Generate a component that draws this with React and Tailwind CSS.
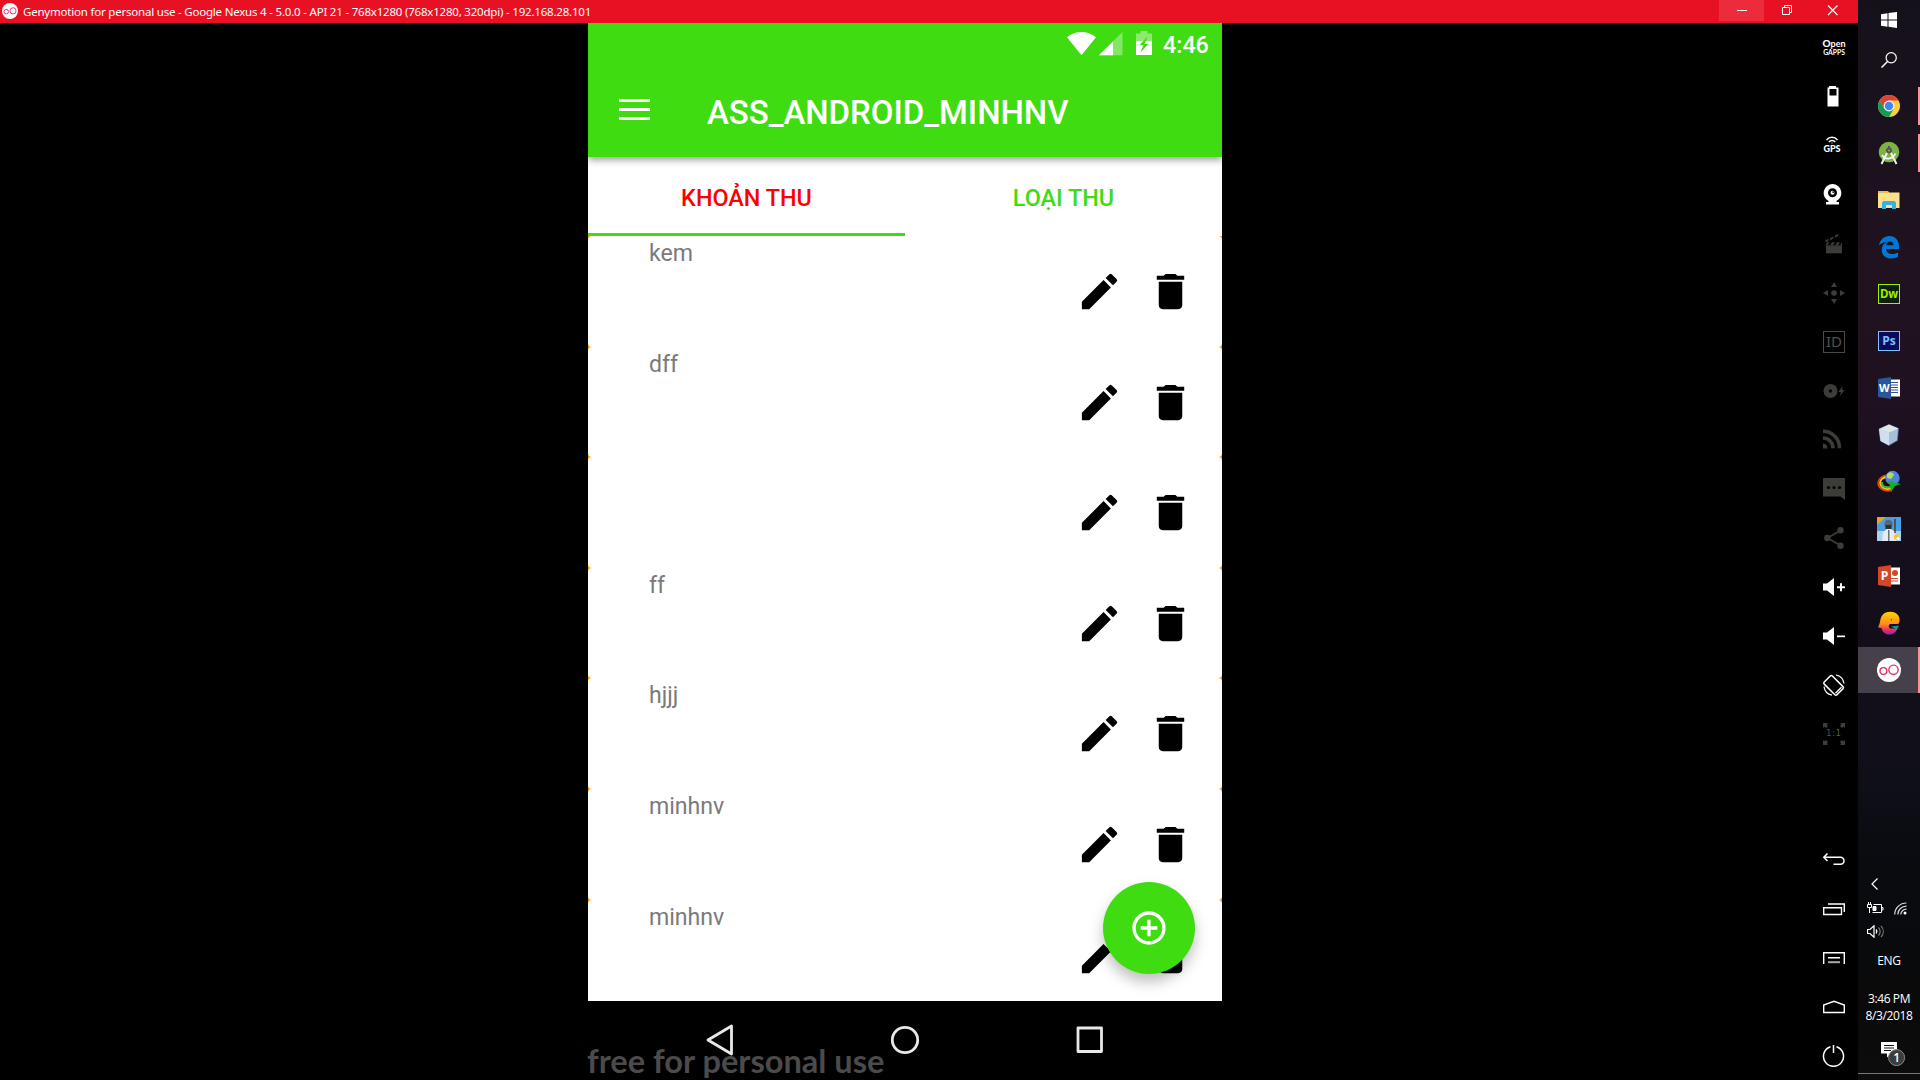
import React from 'react';

const roboto = "font-['Roboto','Noto_Sans',sans-serif]";

/* ---------- phone ---------- */

const rows = ['kem', 'dff', '', 'ff', 'hjjj', 'minhnv', 'minhnv'];

const Pencil = () => (
  <svg className="h-[47px] w-[47px]" viewBox="0 0 24 24" fill="#000">
    <path d="M3 17.25V21h3.75L17.81 9.94l-3.75-3.75L3 17.25zM20.71 7.04a.996.996 0 0 0 0-1.41l-2.34-2.34a.996.996 0 0 0-1.41 0l-1.83 1.83 3.75 3.75 1.83-1.83z" />
  </svg>
);
const Trash = () => (
  <svg className="h-[47px] w-[47px]" viewBox="0 0 24 24" fill="#000">
    <path d="M6 19c0 1.1.9 2 2 2h8c1.1 0 2-.9 2-2V7H6v12zM19 4h-3.5l-1-1h-5l-1 1H5v2h14V4z" />
  </svg>
);

function StatusBar() {
  return (
    <div className="flex h-[40px] items-start pl-[479px] text-white">
      <svg className="mt-[9px] h-[24px] w-[29px] shrink-0" viewBox="0 0 29 24" fill="#fff">
        <path d="M0 5.2C8.5-1.7 20.5-1.7 29 5.2L14.5 23.3z" />
      </svg>
      <svg className="ml-[3px] mt-[9px] h-[24px] w-[24px] shrink-0" viewBox="0 0 24 24" fill="#fff">
        <path d="M23.5 0v23.3H0z" opacity=".35" />
        <path d="M14 9.5v13.8H0z" />
      </svg>
      <svg className="ml-[13px] mt-[8px] h-[24px] w-[16px] shrink-0" viewBox="0 0 16 24">
        <path d="M4.5 0h7v2.500H16V10H0V2.500h4.500z" fill="#fff" opacity=".4" />
        <path d="M0 10h16v14H0z" fill="#fff" />
        <path d="M11.500 5.500L3.500 14h4L4.500 21.500l8-8.500h-4z" fill="#40dc12" />
      </svg>
      <span className="ml-[11px] mt-[9px] text-[23.300px] font-medium leading-[27px]">4:46</span>
    </div>
  );
}

function AppBar() {
  return (
    <header className="relative z-10 h-[134px] bg-[#40dc12] shadow-[0_3px_7px_rgba(0,0,0,0.38)]">
      <StatusBar />
      <div className="flex h-[94px] items-start pl-[31px] text-white">
        <div className="mt-[36px] flex w-[31px] flex-col gap-[6px]">
          <div className="h-[3px] bg-white" />
          <div className="h-[3px] bg-white" />
          <div className="h-[3px] bg-white" />
        </div>
        <h1 className="ml-[57px] mt-[30px] whitespace-nowrap text-[33px] font-medium leading-[40px] tracking-[-0.05px]">ASS_ANDROID_MINHNV</h1>
      </div>
    </header>
  );
}

function Tabs() {
  return (
    <div className="flex h-[79px] text-[23.400px] font-medium leading-[27px]">
      <div className="flex h-[79px] w-[317px] justify-center border-b-[3px] border-[#40dc12] pt-[28px] text-[#ff0000]">KHOẢN THU</div>
      <div className="flex w-[317px] justify-center pt-[28px] text-[#40dc12]">LOẠI THU</div>
    </div>
  );
}

function Row({ label }) {
  return (
    <li className="flex h-[110.600px] shrink-0 bg-[#ff9800]">
      <div className="flex flex-1 items-start rounded-[4px] bg-white">
        <span className="ml-[61px] mt-[4px] w-[427px] text-[23.100px] leading-[27px] text-[#7a7a7a]">{label}</span>
        <div className="mt-[32px] flex gap-[24px]">
          <Pencil />
          <Trash />
        </div>
      </div>
    </li>
  );
}

function Phone() {
  return (
    <div className={`relative flex h-[1057px] w-[634px] flex-col ${roboto}`}>
      <div className="relative flex h-[977.500px] flex-col overflow-hidden bg-white">
        <AppBar />
        <Tabs />
        <ul className="flex flex-col">
          {rows.map((r, i) => <Row key={i} label={r} />)}
        </ul>
        <button className="absolute right-[27px] top-[859px] z-20 flex h-[92px] w-[92px] items-center justify-center rounded-full bg-[#40dc12] shadow-[0_8px_14px_rgba(0,0,0,0.25)]">
          <svg className="h-[40px] w-[40px]" viewBox="0 0 24 24" fill="#fff">
            <path d="M13 7h-2v4H7v2h4v4h2v-4h4v-2h-4V7zm-1-5C6.480 2 2 6.480 2 12s4.480 10 10 10 10-4.480 10-10S17.520 2 12 2zm0 18c-4.410 0-8-3.590-8-8s3.590-8 8-8 8 3.590 8 8-3.590 8-8 8z" />
          </svg>
        </button>
      </div>
      <nav className="flex h-[79px] items-center pl-[117px]">
        <svg className="h-[32px] w-[29px]" viewBox="0 0 29 32" fill="none" stroke="#e8e8e8" strokeWidth="2.800" strokeLinejoin="round">
          <path d="M26.500 2v28L3 16z" />
        </svg>
        <svg className="ml-[156px] h-[30px] w-[30px]" viewBox="0 0 30 30" fill="none" stroke="#e8e8e8" strokeWidth="2.800">
          <circle cx="15" cy="15" r="12.700" />
        </svg>
        <svg className="ml-[156px] h-[28px] w-[28px]" viewBox="0 0 28 28" fill="none" stroke="#e8e8e8" strokeWidth="2.800" strokeLinejoin="round">
          <path d="M2 2h23.500v23.500H2z" />
        </svg>
      </nav>
      <div className="absolute left-[-1px] top-[1018px] whitespace-nowrap font-['Lato',sans-serif] text-[32.600px] font-bold leading-[40px] text-[#505050]/95">free for personal use</div>
    </div>
  );
}

/* ---------- emulator toolbar ---------- */

const dim = '#3c3c38';
const I = ({ children, ...p }) => (
  <svg className="h-[24px] w-[24px]" viewBox="0 0 24 24" fill="none" {...p}>{children}</svg>
);

const Gapps = () => (
  <div className="flex w-[24px] flex-col items-center font-['Lato',sans-serif] text-white">
    <span className="text-[9px] font-bold leading-[8px]"><span className="text-[10px] font-black">O</span>pen</span>
    <span className="text-[6.800px] font-bold leading-[9px]">GAPPS</span>
  </div>
);
const BatteryIcon = () => (
  <I><path d="M7 1h7v1.500h2.500V21.500h-11V2.500H7zM7.500 4v6.500h7V4z" fill="#fff" fillRule="evenodd" /></I>
);
const Gps = () => (
  <div className="mb-[2px] mr-[4px] flex w-[20px] flex-col items-center">
    <svg className="h-[8px] w-[14px]" viewBox="0 0 14 8" fill="none" stroke="#fff" strokeWidth="1.500">
      <path d="M1.500 4c3-3.600 8-3.600 11 0M3.800 6c2-2 4.500-2 6.500 0" />
      <circle cx="7" cy="7" r=".6" fill="#fff" stroke="none" />
    </svg>
    <span className="font-['Lato',sans-serif] text-[9px] font-black leading-[10px] text-white">GPS</span>
  </div>
);
const Webcam = () => (
  <I>
    <path d="M10.500 1a9 9 0 0 1 4 17v1h2.500v2.500H4v-2.500h2.500v-1a9 9 0 0 1 4-17z" fill="#fff" />
    <circle cx="10.500" cy="9.800" r="4.500" fill="#000" />
    <circle cx="10.500" cy="9.800" r="2" fill="#fff" /><circle cx="11.200" cy="9.100" r=".9" fill="#000" />
  </I>
);
const Clapper = () => (
  <I fill={dim}>
    <g transform="translate(-1 -.7)">
      <path d="M5 14h16v8H5z" />
      <path d="M4.500 9l3.200-1.600-.5 2.500-2.500 1.200zM9.200 6.600l3.200-1.600-.5 2.500-3.200 1.600zM14 4.200l3.500-1.700-.8 2.500-3 1.500z" />
      <path d="M5 14v-1.500L6.500 11h2L6.500 14zM9 14l2-3h3l-2 3zM14 14l2-3h3l-2 3zM19 14l2-3v3z" />
    </g>
  </I>
);
const Move = () => (
  <I fill={dim}>
    <circle cx="12" cy="12" r="2.800" />
    <path d="M12 1l3 5H9zM12 23l3-5H9zM1 12l5-3v6zM23 12l-5-3v6z" />
  </I>
);
const IdIcon = () => (
  <div className="flex h-[22px] w-[22px] items-center justify-center border border-[#484844] font-['Noto_Sans',sans-serif] text-[15px] leading-none text-[#50504c]">ID</div>
);
const Disc = () => (
  <I fill={dim}>
    <path d="M8.500 5a7 7 0 1 1 0 14 7 7 0 0 1 0-14zm0 5.300a1.700 1.700 0 1 0 0 3.400 1.700 1.700 0 0 0 0-3.400z" fillRule="evenodd" />
    <path d="M20.500 7l-4 6h2.500l-1.500 4.500 5-6.500h-2.500z" />
  </I>
);
const Rss = () => (
  <I stroke={dim} strokeWidth="3.600">
    <path d="M1 3.200c9 0 16.500 7 16.500 17M1 10c5.500 0 10 4.500 10 10.200" />
    <path d="M1 20.500v-5a5 5 0 0 1 4.500 5z" fill={dim} stroke="none" />
  </I>
);
const Chat = () => (
  <I fill={dim}>
    <path d="M1 1h22v22l-4.500-3.500H1z" />
    <g fill="#000"><circle cx="6.500" cy="10.500" r="1.600" /><circle cx="12" cy="10.500" r="1.600" /><circle cx="17.500" cy="10.500" r="1.600" /></g>
  </I>
);
const Share = () => (
  <I fill={dim}>
    <path d="M18.500 4.500L5.500 12l13 7.500" fill="none" stroke={dim} strokeWidth="1.800" />
    <circle cx="18.500" cy="4.300" r="3.200" /><circle cx="5.300" cy="12" r="3.200" /><circle cx="18.500" cy="19.700" r="3.200" />
  </I>
);
const Vol = ({ plus }) => (
  <I fill="#fff">
    <path d="M1 8.500h4L12 3v18l-7-5.500H1z" />
    <path d={plus ? 'M15 11.200h8v2h-8zM18 8.200h2v8h-2z' : 'M15 11.500h8v1.700h-8z'} />
  </I>
);
const Rotate = () => (
  <I stroke="#fff" strokeWidth="1.500">
    <rect x="5.700" y="3" width="11.500" height="18" rx="1.500" transform="rotate(-45 12 12)" />
    <path d="M13.500 20.200l6-6" />
    <path d="M14 2a10 10 0 0 1 8 8.500M10 22.200a10 10 0 0 1-8-8.500" strokeWidth="1.200" />
  </I>
);
const OneToOne = () => (
  <div className="grid h-[24px] w-[24px] place-items-center">
    <svg className="col-start-1 row-start-1 h-[24px] w-[24px]" viewBox="0 0 24 24" fill={dim}>
      <path d="M1 1h5L4.800 2.200 6 4 4 6 2.200 4.800 1 6zM23 1h-5l1.200 1.200L18 4l2 2 1.800-1.200L23 6zM1 23h5l-1.200-1.200L6 20l-2-2-1.800 1.200L1 18zM23 23h-5l1.200-1.200L18 20l2-2 1.800 1.200L23 18z" />
    </svg>
    <span className="col-start-1 row-start-1 font-['DejaVu_Sans',sans-serif] text-[8px] leading-none tracking-[0.8px] text-[#5a5a56]">1:1</span>
  </div>
);
const Back = () => (
  <I stroke="#fff" strokeWidth="1.500">
    <path d="M5.500 5.500L1.800 9.300 5.500 13M2 9.300h16.500a3.500 3.500 0 0 1 0 7H11.500" />
  </I>
);
const Recent = () => (
  <I stroke="#fff" strokeWidth="1.400"><path d="M1.700 10.700h17.800v6.800H1.700zM6 7h16.300v8" /></I>
);
const MenuIcon = () => (
  <I stroke="#fff" strokeWidth="1.400"><path d="M1.700 18V6.700h20.600V18M6 11.700h12" /><path d="M6 16.200h12" strokeWidth="2" stroke="#aaa" /></I>
);
const HomeIcon = () => (
  <I stroke="#fff" strokeWidth="1.400"><path d="M1.700 17.500V10L12 6.300 22.300 10v7.500z" /></I>
);
const Power = () => (
  <I stroke="#fff" strokeWidth="1.500"><path d="M8.500 2.700a10 10 0 1 0 6 0M11.500 1v8" /></I>
);

const toolsTop = [Gapps, BatteryIcon, Gps, Webcam, Clapper, Move, IdIcon, Disc, Rss, Chat, Share, () => <Vol plus />, Vol, Rotate, OneToOne];
const toolsBottom = [Back, Recent, MenuIcon, HomeIcon, Power];

function Toolbar() {
  return (
    <aside className="flex w-[48px] flex-col justify-between">
      {[toolsTop, toolsBottom].map((group, g) => (
        <div key={g} className={g ? 'mb-[-0.5px] flex flex-col' : 'flex flex-col'}>
          {group.map((T, i) => (
            <div key={i} className="flex h-[49px] items-center justify-center"><T /></div>
          ))}
        </div>
      ))}
    </aside>
  );
}

/* ---------- title bar ---------- */

function Genymotion({ className }) {
  return (
    <svg className={className} viewBox="0 0 24 24" fill="none" stroke="#dc2f6d" strokeWidth="1.400">
      <circle cx="12" cy="12" r="12" fill="#fff" stroke="none" />
      <circle cx="6.400" cy="13" r="3.400" /><ellipse cx="16.500" cy="11.800" rx="4.600" ry="4.700" />
    </svg>
  );
}

function TitleBar() {
  return (
    <div className="flex h-[23px] bg-[#e81123] text-white">
      <Genymotion className="ml-[2px] mt-[3px] h-[16px] w-[16px]" />
      <span className="ml-[5px] flex-1 whitespace-nowrap font-['Noto_Sans',sans-serif] text-[11.500px] leading-[23px] tracking-[-0.205px]">
        Genymotion for personal use - Google Nexus 4 - 5.0.0 - API 21 - 768x1280 (768x1280, 320dpi) - 192.168.28.101
      </span>
      <div className="flex h-[21px]">
        <div className="flex w-[45px] items-center justify-center bg-[#ec2c3c]"><div className="h-px w-[10px] bg-white" /></div>
        <svg className="h-[21px] w-[46px]" viewBox="0 0 46 21" fill="none" stroke="#fff">
          <path d="M18.500 7.500h7v7h-7zM20.500 7.500v-2h7v7h-2" />
        </svg>
        <svg className="h-[21px] w-[48px]" viewBox="0 0 48 21" fill="none" stroke="#fff" strokeWidth="1.200">
          <path d="M18 5.500l9.500 9.500M27.500 5.500L18 15" />
        </svg>
      </div>
    </div>
  );
}

/* ---------- windows taskbar ---------- */

const T = ({ children, ...p }) => (
  <svg className="h-[24px] w-[24px]" viewBox="0 0 24 24" {...p}>{children}</svg>
);
const Chrome = () => (
  <T>
    <circle cx="12" cy="12" r="11" fill="#ffcd40" />
    <path d="M2.500 6.500A11 11 0 0 1 21.500 6.500H12L7.200 14.800z" fill="#db4437" />
    <path d="M2.500 6.500L7.300 14.800 16.700 14.800 12 23A11 11 0 0 1 2.500 6.500z" fill="#0f9d58" />
    <circle cx="12" cy="12" r="5.400" fill="#f1f1f1" /><circle cx="12" cy="12" r="4.200" fill="#4285f4" />
  </T>
);
const Studio = () => (
  <T>
    <circle cx="12" cy="11" r="10.300" fill="#7cb342" />
    <path d="M11 10L4.500 23M13 10l6.500 13" stroke="#eee" strokeWidth="2" />
    <path d="M5 14c3 5 10 5 13.500-1.500" fill="none" stroke="#f5f5f5" strokeWidth="1.800" />
    <path d="M11 5h2v3h-2z" fill="#555" /><circle cx="12" cy="9.500" r="3" fill="#555" /><circle cx="12" cy="9.500" r="1.100" fill="#7cb342" />
  </T>
);
const Explorer = () => (
  <T>
    <path d="M1 3h10l1 1.500h10.500V20H1z" fill="#ffe08a" /><path d="M1 3h10v2H1z" fill="#f4b93a" /><path d="M3 3h3v1.500H3z" fill="#7fd3f7" />
    <path d="M5 21v-6.500l1.500-1.500h11l1.500 1.500V21h-4v-4H9v4z" fill="#36b1e8" />
  </T>
);
const Edge = () => (
  <T fill="#0078d7">
    <path d="M2 10.600C3 4.500 7.300 1 12.300 1 18.500 1 22 5.500 22 11v3H9c.3 3.500 3.200 5 6.300 5 2.300 0 4.200-.6 5.700-1.500v4.300C19.200 22.900 16.700 23.500 14 23.500 8 23.500 4.700 19.800 4.700 15c0-3.600 2-6.800 5.300-8.300C6.500 6.900 3.600 8.400 2 10.600zM9.200 10.300h7.300c0-2.300-1.200-3.800-3.500-3.800-2 0-3.500 1.600-3.800 3.800z" />
  </T>
);
const Dw = () => (
  <div className="flex h-[20px] w-[22px] items-center justify-center border border-[#9cf000] bg-[#0e2106] font-['Open_Sans',sans-serif] text-[11.500px] font-bold leading-none tracking-[-0.3px] text-[#9cf000]">Dw</div>
);
const Ps = () => (
  <div className="flex h-[20px] w-[22px] items-center justify-center border border-[#7bc0ff] bg-[#080c5c] font-['Open_Sans',sans-serif] text-[12px] font-bold leading-none text-[#7bc0ff]">Ps</div>
);
const Word = () => (
  <T>
    <path d="M12 3.500h11v17H12z" fill="#fff" />
    <path d="M14 6.500h7M14 9h7M14 11.500h7M14 14h7M14 16.500h7" stroke="#2b579a" strokeWidth="1" />
    <path d="M1 3l13-2v22L1 21z" fill="#2b579a" />
    <text x="7.300" y="16" textAnchor="middle" fill="#fff" fontSize="11" fontWeight="bold" fontFamily="Open Sans">W</text>
  </T>
);
const Cube = () => (
  <T>
    <path d="M12 1.500l9.500 4L20.500 17.500l-8.500 5-8.500-4.500L2 6z" fill="#a9bfd8" stroke="#3c5d9d" strokeWidth=".7" />
    <path d="M12 1.500l9.500 4L12 9.500 2 6z" fill="#dde7e6" /><path d="M2 6l10 3.500v13L3.500 18z" fill="#d2deed" />
  </T>
);
const Idm = () => (
  <T>
    <path d="M1 13c1-5 5-8 10-7.500M1 13c1 7 9 9 14 7" fill="none" stroke="#e5401c" strokeWidth="1.800" />
    <path d="M3 13c0-3 3-6 7-6M3 13c1 5 6 7 11 5.500" fill="none" stroke="#f2d21b" strokeWidth="1.800" />
    <path d="M5 12c-1 4 3 6.500 9 5" fill="none" stroke="#45b52d" strokeWidth="2.200" />
    <circle cx="15.500" cy="8" r="7.200" fill="#4c86d9" /><path d="M10 4c3-3 6-2 7 1l-3 4-4-1z" fill="#b8d86b" />
    <path d="M11 11l13 3-6 2-4 6-.5-5z" fill="#16b01a" />
  </T>
);
const Pubg = () => (
  <T>
    <path d="M0 0h24v24H0z" fill="#4c9ee0" /><path d="M0 14h24v10H0z" fill="#a9d2ef" /><path d="M0 0h9L0 8z" fill="#e7a51c" />
    <path d="M5 24l1-9 4-3h4l4 3 1 9z" fill="#e8ebee" /><path d="M11 13h1.500v11H11z" fill="#6d6f72" />
    <circle cx="11.500" cy="7" r="4.200" fill="#5b6774" /><path d="M8.500 8h6v4h-6z" fill="#2b2f36" />
    <path d="M18 2v14" stroke="#333" strokeWidth="1.300" /><circle cx="19.500" cy="20" r="2.700" fill="#f5c52c" /><circle cx="21" cy="21.500" r="1.500" fill="#fff" />
  </T>
);
const Ppt = () => (
  <T>
    <path d="M12 3.500h11v17H12z" fill="#fff" /><circle cx="18" cy="9" r="3" fill="#d24726" />
    <path d="M14 14.500h7M14 17h7" stroke="#d24726" strokeWidth="1.200" />
    <path d="M1 3l13-2v22L1 21z" fill="#d24726" />
    <text x="7.500" y="16" textAnchor="middle" fill="#fff" fontSize="12" fontWeight="bold" fontFamily="Open Sans">P</text>
  </T>
);
const Whale = () => (
  <T>
    <defs>
      <linearGradient id="whale" x1="0" y1="0" x2="0" y2="1">
        <stop offset="0" stopColor="#ffd400" /><stop offset=".55" stopColor="#ff8a1f" /><stop offset=".8" stopColor="#ee2a5c" /><stop offset="1" stopColor="#8d22c9" />
      </linearGradient>
    </defs>
    <path d="M1 16C3.500 12.500 3 8 4.500 5.500 6.500 2 9.500.8 13.500.8 19.500.8 22.500 4.500 22.500 9c0 2-.5 3.500-1.500 4h-8c-2.500 2-1 5 2 4.500l5 .5c-1 3-4 5.500-7.500 5.500-4.500 0-7-2.500-8-6.500C3.500 17 2 17 1 16z" fill="url(#whale)" />
    <path d="M14 15.500l8-1-2.500 5-2-2z" fill="#1c8ea8" /><circle cx="14.500" cy="8.800" r=".7" fill="#542" />
  </T>
);

const apps = [
  { C: Chrome, running: true }, { C: Studio, running: true }, { C: Explorer }, { C: Edge }, { C: Dw }, { C: Ps },
  { C: Word }, { C: Cube }, { C: Idm }, { C: Pubg }, { C: Ppt }, { C: Whale },
];

function Taskbar() {
  return (
    <aside className="flex h-[1080px] w-[62px] flex-col bg-[linear-gradient(180deg,#15111b_0%,#1b121e_14%,#21121f_26%,#201120_36%,#180f1d_46%,#130d1a_60%,#11101a_70%,#090b10_80%,#0a0a0b_92%,#0c0c0c_100%)] font-['Open_Sans',sans-serif] text-white">
      <div className="flex h-[40px] items-center justify-center">
        <svg className="h-[16px] w-[16px]" viewBox="0 0 16 16" fill="#fff"><path d="M0 2.200L6.500 1.300v6.200H0zM7.500 1.100L16 0v7.500H7.500zM0 8.500h6.500v6.200L0 13.800zM7.500 8.500H16V16l-8.500-1.200z" /></svg>
      </div>
      <div className="flex h-[42.300px] justify-center pt-[12px]">
        <svg className="h-[16px] w-[16px]" viewBox="0 0 16 16" fill="none" stroke="#fff" strokeWidth="1.200"><circle cx="10.200" cy="5.800" r="5.100" /><path d="M6.500 9.500L.5 15.500" strokeWidth="1.500" /></svg>
      </div>
      {apps.map(({ C, running }, i) => (
        <div key={i} className="flex h-[47px] items-center">
          <div className="flex w-[60px] justify-center pl-[2px]"><C /></div>
          {running && <div className="h-[38px] w-[2px] bg-[#ff8f9b]" />}
        </div>
      ))}
      <div className="mt-[0.700px] flex h-[46px] items-center bg-[#454049]">
        <div className="flex w-[60px] justify-center pl-[2px]"><Genymotion className="h-[24px] w-[24px]" /></div>
        <div className="h-[46px] w-[2px] bg-[#ff8f9b]" />
      </div>
      <div className="mt-[185px] flex h-[12px] pl-[13px]">
        <svg className="h-[12px] w-[8px]" viewBox="0 0 8 12" fill="none" stroke="#fff" strokeWidth="1.200"><path d="M6.500 .5L1 6l5.500 5.500" /></svg>
      </div>
      <div className="mt-[12px] flex h-[14px] justify-between pl-[9px] pr-[13px]">
        <svg className="h-[14px] w-[17px]" viewBox="0 0 17 14" fill="none" stroke="#fff"><path d="M6.500 2.500h8v8h-9M15 5.500h1v2.500h-1M.5 2.500h4v3h-4zM1.500 0v2M3.500 0v2M2.500 6v5" /><path d="M6 4.500h3v4H6z" fill="#fff" /></svg>
        <svg className="h-[13px] w-[13px]" viewBox="0 0 13 13" fill="none" stroke="#fff" strokeWidth="1.200"><path d="M.7 12.500C.7 6 6 1 12.500 1M3.800 12.500c0-4.800 4-8.300 8.700-8.300M6.800 12.500c0-3 2.500-5.300 5.700-5.300" opacity=".85" /><circle cx="11" cy="11" r="1.500" fill="#fff" stroke="none" /></svg>
      </div>
      <div className="mt-[9px] flex h-[14px] pl-[9px]">
        <svg className="h-[13px] w-[17px]" viewBox="0 0 17 13" fill="none" stroke="#fff" strokeWidth="1.200"><path d="M.5 4.500h2.500L7 .8v11.400L3 8.500H.5z" /><path d="M9 4.500c1 1.200 1 2.800 0 4" /><path d="M11.500 2.500c2 2.400 2 5.600 0 8M14 .8c3 3.400 3 8 0 11.400" opacity=".45" /></svg>
      </div>
      <div className="mt-[14px] text-center text-[12px] leading-[16px] tracking-[-0.3px]">ENG</div>
      <div className="mt-[21px] text-center text-[12px] leading-[17px] tracking-[-0.4px]"><div>3:46 PM</div><div>8/3/2018</div></div>
      <div className="mt-[18px] flex h-[24px] pl-[23px]">
        <svg className="h-[25px] w-[26px]" viewBox="0 0 26 25">
          <path d="M0 0h16v11.500H10.500L6 15.500v-4H0z" fill="#fff" /><path d="M3 3.500h10M3 6h10M3 8.500h7" stroke="#111" />
          <circle cx="15.600" cy="15.600" r="8" fill="#3c3c3c" stroke="#8a8a8a" />
          <text x="15.600" y="20" textAnchor="middle" fill="#fff" fontSize="12" fontWeight="600" fontFamily="Open Sans">1</text>
        </svg>
      </div>
      <div className="mt-[7px] h-px bg-[#777]" />
    </aside>
  );
}

export default function App() {
  return (
    <div className="flex h-[1080px] w-[1920px] overflow-hidden bg-black">
      <div className="flex w-[1858px] flex-col">
        <TitleBar />
        <div className="flex h-[1057px] justify-between pl-[588px]">
          <Phone />
          <Toolbar />
        </div>
      </div>
      <Taskbar />
    </div>
  );
}
